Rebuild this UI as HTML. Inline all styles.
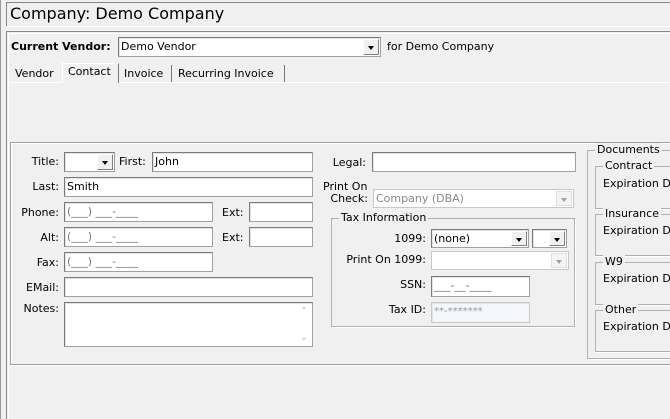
<!DOCTYPE html>
<html><head><style>
*{box-sizing:border-box;margin:0;padding:0}
body{width:670px;height:419px;background:#f0f0f0;font-family:"DejaVu Sans","Liberation Sans",sans-serif;font-size:11px;color:#000;position:relative;overflow:hidden}
.a{position:absolute;white-space:nowrap}
.in{position:absolute;background:#fff;border:1px solid #a0a0a0;border-top-color:#7a7a7a;border-left-color:#7a7a7a;box-shadow:inset 1px 1px 0 #e3e3e3;padding:1px 2px;line-height:16px;overflow:hidden;white-space:nowrap}
.lb{position:absolute;text-align:right;white-space:nowrap;line-height:14px}
.dd{position:absolute;right:1px;top:1px;bottom:1px;width:16px;background:#f0f0f0;border:1px solid #fff;border-right-color:#808080;border-bottom-color:#808080}
.dd:after{content:"";position:absolute;left:4px;top:6px;border:3.5px solid transparent;border-top:4px solid #000}
.dis .dd:after{border-top-color:#a0a0a0}
.gb{position:absolute;border:1px solid #b0b0b0;box-shadow:1px 1px 0 #fff}
.lg{position:absolute;top:-8px;left:7px;background:#f0f0f0;padding:0 2px;line-height:14px}
.ph{color:#777}
</style></head><body>
<div class="a" style="left:6px;top:2px;width:664px;height:25px;border-top:1px solid #888;border-left:1px solid #888;border-bottom:1px solid #fff"></div>
<div class="a" style="left:10px;top:4px;font-size:16px;line-height:20px">Company: Demo Company</div>
<div class="a" style="left:0;top:0;width:2px;height:419px;border-left:1px solid #999"></div>
<div class="a" style="left:6px;top:31px;width:664px;height:388px;border-top:1px solid #888;border-left:1px solid #888"></div>
<div class="a" style="left:8px;top:33px;width:662px;height:386px;border-top:1px solid #fff;border-left:1px solid #fff"></div>
<div class="a" style="left:11px;top:40px;font-weight:bold">Current Vendor:</div>
<div class="in" style="left:118px;top:37px;width:263px;height:20px">Demo Vendor<span class="dd"></span></div>
<div class="a" style="left:387px;top:40px">for Demo Company</div>
<div class="a" style="left:10px;top:82px;width:660px;border-top:1px solid #fff"></div>
<div class="a" style="left:15px;top:67px">Vendor</div>
<div class="a" style="left:62px;top:63px;width:57px;height:20px;background:#f0f0f0;border-top:1px solid #fff;border-left:1px solid #fff;border-right:1px solid #777"></div>
<div class="a" style="left:68px;top:65px">Contact</div>
<div class="a" style="left:124px;top:67px">Invoice</div>
<div class="a" style="left:171px;top:65px;height:17px;border-left:1px solid #777"></div>
<div class="a" style="left:178px;top:67px">Recurring Invoice</div>
<div class="a" style="left:284px;top:65px;height:17px;border-left:1px solid #777"></div>
<div class="a" style="left:10px;top:142px;width:660px;height:223px;border:1px solid #a0a0a0;border-right:none;box-shadow:inset 1px 1px 0 #fff,0 1px 0 #fff"></div>

<div class="lb" style="left:20px;top:155px;width:39px">Title:</div>
<div class="in" style="left:64px;top:152px;width:51px;height:20px"><span class="dd"></span></div>
<div class="lb" style="left:119px;top:155px">First:</div>
<div class="in" style="left:152px;top:152px;width:161px;height:20px">John</div>
<div class="lb" style="left:20px;top:180px;width:39px">Last:</div>
<div class="in" style="left:64px;top:177px;width:249px;height:20px">Smith</div>
<div class="lb" style="left:10px;top:206px;width:49px">Phone:</div>
<div class="in ph" style="left:64px;top:202px;width:149px;height:20px">(___) ___-____</div>
<div class="lb" style="left:222px;top:206px">Ext:</div>
<div class="in" style="left:249px;top:202px;width:64px;height:20px"></div>
<div class="lb" style="left:10px;top:231px;width:49px">Alt:</div>
<div class="in ph" style="left:64px;top:227px;width:149px;height:20px">(___) ___-____</div>
<div class="lb" style="left:222px;top:231px">Ext:</div>
<div class="in" style="left:249px;top:227px;width:64px;height:20px"></div>
<div class="lb" style="left:10px;top:256px;width:49px">Fax:</div>
<div class="in ph" style="left:64px;top:252px;width:149px;height:20px">(___) ___-____</div>
<div class="lb" style="left:10px;top:281px;width:49px">EMail:</div>
<div class="in" style="left:64px;top:277px;width:249px;height:20px"></div>
<div class="lb" style="left:10px;top:302px;width:49px">Notes:</div>
<div class="in" style="left:64px;top:302px;width:249px;height:45px"><span class="a" style="right:4px;top:1px;color:#bbb;font-size:10px">&#8963;</span><span class="a" style="right:4px;top:27px;color:#bbb;font-size:10px">&#8964;</span></div>

<div class="lb" style="left:330px;top:156px;width:36px">Legal:</div>
<div class="in" style="left:372px;top:152px;width:204px;height:20px"></div>
<div class="a" style="left:323px;top:180px">Print On</div>
<div class="lb" style="left:320px;top:192px;width:48px">Check:</div>
<div class="in dis" style="left:373px;top:189px;width:201px;height:19px;color:#888;border-color:#c8c8c8;box-shadow:none">Company (DBA)<span class="dd" style="background:#f4f4f4;border-color:#e0e0e0"></span></div>

<div class="gb" style="left:331px;top:218px;width:244px;height:109px"><span class="lg">Tax Information</span></div>
<div class="lb" style="left:340px;top:232px;width:86px">1099:</div>
<div class="in" style="left:431px;top:229px;width:98px;height:19px">(none)<span class="dd"></span></div>
<div class="in" style="left:532px;top:229px;width:35px;height:19px"><span class="dd"></span></div>
<div class="lb" style="left:340px;top:253px;width:86px">Print On 1099:</div>
<div class="in dis" style="left:431px;top:251px;width:138px;height:19px;border-color:#c8c8c8;box-shadow:none"><span class="dd" style="background:#f4f4f4;border-color:#e0e0e0"></span></div>
<div class="lb" style="left:340px;top:278px;width:86px">SSN:</div>
<div class="in ph" style="left:431px;top:276px;width:99px;height:21px">___-__-____</div>
<div class="lb" style="left:340px;top:303px;width:86px">Tax ID:</div>
<div class="in" style="left:431px;top:302px;width:99px;height:21px;background:#f3f6fb;color:#999;font-size:10px;border-color:#c8c8c8">**-*******</div>

<div class="gb" style="left:587px;top:150px;width:90px;height:209px;border-right:none"><span class="lg">Documents</span></div>
<div class="gb" style="left:595px;top:166px;width:80px;height:43px;border-right:none"><span class="lg">Contract</span></div>
<div class="a" style="left:603px;top:177px">Expiration D</div>
<div class="gb" style="left:595px;top:214px;width:80px;height:42px;border-right:none"><span class="lg">Insurance</span></div>
<div class="a" style="left:603px;top:224px">Expiration D</div>
<div class="gb" style="left:595px;top:262px;width:80px;height:43px;border-right:none"><span class="lg">W9</span></div>
<div class="a" style="left:603px;top:272px">Expiration D</div>
<div class="gb" style="left:595px;top:310px;width:80px;height:42px;border-right:none"><span class="lg">Other</span></div>
<div class="a" style="left:603px;top:320px">Expiration D</div>
</body></html>
